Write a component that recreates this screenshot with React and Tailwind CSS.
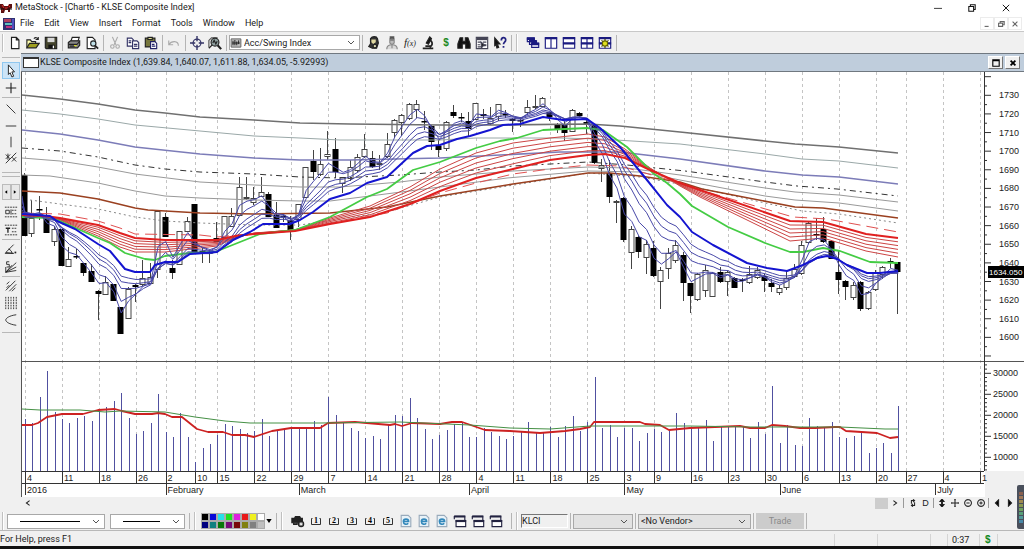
import React from "react";

/* ---------- chart data ---------- */

const X0 = 25;
const STEP = 7.4;
const barX = (i) => X0 + STEP * i;

// [high, low, body top, body bottom, kind] in chart units; f = down bar, h = up bar, g = shaded
const CANDLES = [
  [173, 236, 175, 236, "f"], [200, 237, 218, 234, "h"], [196, 220, 209, 210, "f"], [207, 233, 217, 233, "f"],
  [226, 246, 229, 242, "h"], [229, 266, 229, 266, "f"], [247, 267, 259, 267, "h"], [249, 259, 256, 257, "f"],
  [263, 276, 263, 273, "f"], [264, 282, 271, 282, "f"], [290, 320, 291, 294, "f"], [276, 295, 282, 295, "h"],
  [284, 301, 284, 301, "f"], [307, 334, 307, 334, "f"], [287, 319, 289, 319, "h"], [284, 302, 285, 287, "f"],
  [260, 286, 278, 285, "h"], [263, 284, 277, 284, "h"], [211, 278, 211, 270, "h"], [213, 237, 217, 237, "f"],
  [260, 279, 268, 273, "f"], [231, 265, 231, 265, "h"], [217, 232, 221, 232, "h"], [204, 253, 204, 253, "f"],
  [248, 263, 251, 253, "f"], [250, 263, 252, 254, "f"], [222, 242, 238, 242, "f"], [216, 238, 216, 238, "h"],
  [208, 227, 216, 227, "h"], [177, 216, 187, 216, "h"], [177, 200, 197, 199, "h"], [187, 205, 198, 203, "h"],
  [177, 197, 192, 197, "h"], [192, 217, 194, 217, "f"], [202, 228, 215, 228, "f"], [214, 222, 216, 217, "f"],
  [216, 240, 220, 230, "f"], [204, 227, 204, 220, "h"], [167, 198, 167, 198, "h"], [150, 180, 161, 172, "f"],
  [148, 176, 164, 175, "h"], [131, 160, 154, 157, "h"], [138, 178, 149, 172, "f"], [177, 193, 177, 184, "h"],
  [160, 181, 167, 179, "h"], [154, 172, 157, 171, "h"], [134, 158, 149, 157, "h"], [151, 168, 158, 167, "f"],
  [155, 170, 163, 165, "h"], [133, 158, 144, 157, "h"], [119, 138, 120, 133, "h"], [114, 136, 115, 123, "h"],
  [103, 120, 104, 119, "h"], [100, 118, 104, 110, "h"], [111, 130, 121, 122, "f"], [125, 150, 126, 142, "f"],
  [140, 157, 146, 150, "f"], [121, 151, 122, 149, "h"], [105, 118, 112, 116, "f"], [113, 122, 117, 118, "f"],
  [112, 137, 121, 129, "f"], [103, 120, 103, 120, "h"], [109, 119, 114, 116, "f"], [107, 125, 118, 124, "h"],
  [104, 121, 104, 117, "h"], [110, 118, 114, 115, "f"], [118, 132, 119, 121, "f"], [117, 127, 120, 121, "f"],
  [100, 115, 107, 113, "h"], [95, 109, 106, 108, "h"], [97, 107, 98, 107, "h"], [112, 121, 112, 117, "f"],
  [123, 133, 125, 129, "f"], [121, 141, 125, 133, "f"], [109, 132, 110, 132, "h"], [112, 117, 113, 116, "f"],
  [118, 134, 122, 124, "f"], [125, 164, 125, 163, "f"], [159, 182, 165, 169, "g"], [160, 203, 173, 197, "f"],
  [200, 223, 201, 203, "g"], [197, 242, 198, 240, "f"], [226, 269, 229, 253, "h"], [236, 258, 237, 252, "f"],
  [240, 274, 244, 258, "h"], [241, 277, 248, 276, "f"], [267, 309, 270, 282, "h"], [248, 279, 253, 269, "h"],
  [240, 263, 245, 261, "h"], [252, 301, 255, 283, "f"], [283, 313, 283, 296, "f"], [273, 301, 274, 300, "h"],
  [265, 297, 270, 291, "h"], [272, 297, 273, 297, "h"], [267, 283, 272, 282, "f"], [271, 296, 272, 282, "h"],
  [277, 288, 278, 288, "f"], [278, 292, 279, 281, "f"], [266, 284, 274, 283, "h"], [267, 279, 270, 278, "h"],
  [274, 292, 276, 281, "f"], [279, 292, 283, 287, "f"], [285, 295, 288, 293, "h"], [270, 290, 278, 288, "h"],
  [264, 278, 269, 277, "h"], [241, 275, 245, 274, "h"], [222, 244, 223, 243, "h"], [218, 240, 234, 235, "f"],
  [217, 243, 229, 242, "f"], [240, 259, 241, 259, "f"], [250, 294, 272, 280, "f"], [280, 300, 281, 287, "f"],
  [282, 300, 285, 298, "h"], [281, 311, 282, 309, "f"], [291, 310, 292, 309, "h"], [270, 291, 273, 290, "h"],
  [266, 279, 267, 275, "h"], [258, 268, 261, 262, "f"], [262, 314, 262, 272, "f"],
];

const VOLUME_TOPS = [
  419, 423, 397, 371, 412, 419, 423, 418, 416, 421, 410, 407, 401, 393, 418, 434, 431, 423, 394, 432, 437, 413, 437,
  462, 448, 444, 435, 424, 426, 429, 433, 431, 419, 436, 431, 428, 428, 428, 428, 421, 425, 397, 415, 422, 428, 431,
  438, 436, 439, 424, 415, 416, 398, 418, 429, 439, 435, 430, 424, 423, 437, 437, 428, 432, 436, 439, 436, 431, 422,
  432, 432, 427, 437, 426, 416, 431, 422, 377, 428, 425, 437, 428, 428, 441, 433, 429, 432, 431, 413, 423, 428, 428,
  420, 441, 427, 427, 427, 426, 438, 422, 434, 386, 443, 425, 445, 446, 418, 426, 427, 422, 437, 438, 436, 432, 453,
  448, 443, 453, 406,
];

const GRAY = [[22, 95], [60, 99], [98, 104], [135, 110], [165, 113], [200, 117], [254, 120], [300, 123], [350, 124], [440, 125], [500, 125], [588, 124], [620, 126], [680, 132], [765, 141], [795, 144], [839, 147], [898, 153]];
const SLATE = [[22, 110], [60, 114], [98, 119], [135, 125], [200, 131], [254, 136], [300, 138], [340, 140], [440, 140], [476, 138], [560, 138], [600, 139], [680, 144], [765, 154], [802, 159], [839, 161], [898, 168]];
const STEEL = [[22, 130], [60, 134], [98, 140], [135, 147], [200, 154], [254, 158], [300, 160], [350, 160], [440, 158], [500, 155], [560, 152], [620, 152], [680, 159], [765, 171], [802, 175], [839, 177], [898, 184]];
const DASHDOT = [[22, 148], [60, 151], [98, 157], [135, 165], [165, 169], [200, 172], [254, 174], [300, 177], [340, 178], [400, 175], [440, 172], [476, 170], [513, 166], [588, 162], [627, 165], [685, 171], [765, 182], [797, 186], [837, 189], [898, 196]];
const THIN_A = [[22, 158], [60, 161], [98, 167], [135, 174], [200, 182], [254, 185], [300, 187], [340, 187], [400, 182], [440, 177], [513, 171], [588, 167], [627, 168], [680, 175], [765, 188], [795, 192], [839, 195], [898, 202]];
const THIN_B = [[22, 175], [50, 176], [98, 183], [135, 191], [165, 196], [200, 198], [254, 200], [300, 201], [330, 201], [370, 196], [440, 187], [507, 178], [588, 171], [640, 172], [680, 180], [765, 196], [795, 200], [839, 203], [898, 211]];
const BROWN = [[22, 191], [60, 193], [98, 199], [135, 208], [148, 210], [200, 213], [254, 214], [330, 213], [387, 207], [440, 196], [513, 184], [588, 173], [610, 173], [640, 176], [680, 182], [702, 189], [795, 207], [823, 208], [898, 218]];
const DOTTED = [[30, 200], [60, 204], [98, 209], [135, 217], [165, 221], [200, 223], [254, 225], [300, 225], [387, 212], [440, 197], [588, 173], [640, 177], [690, 186], [765, 203], [802, 211], [839, 214], [898, 223]];
const RED_DASH = [[22, 213], [60, 214], [98, 221], [120, 228], [135, 234], [200, 235], [217, 237], [260, 233], [300, 229], [387, 213], [440, 193], [476, 183], [513, 174], [550, 169], [588, 165], [620, 166], [680, 183], [700, 190], [793, 217], [827, 219], [898, 232]];
const RED = [[22, 215], [45, 216], [60, 218], [98, 225], [120, 233], [135, 238], [165, 240], [217, 240], [235, 236], [254, 234], [295, 231], [330, 224], [370, 217], [410, 204], [440, 191], [476, 178], [513, 169], [550, 160], [588, 155], [605, 154], [625, 158], [650, 170], [680, 183], [700, 190], [790, 221], [823, 222], [866, 234], [898, 238]];
const RED_OUTER = [[22, 216], [45, 217], [60, 220], [98, 236], [120, 247], [135, 252], [165, 252], [217, 246], [235, 238], [254, 233], [295, 230], [330, 218], [370, 206], [410, 187], [440, 169], [476, 153], [513, 143], [550, 138], [588, 134], [605, 137], [625, 149], [650, 168], [680, 186], [700, 197], [790, 241], [823, 238], [866, 251], [898, 257]];
const GREEN = [[22, 217], [50, 218], [60, 221], [98, 238], [110, 243], [125, 253], [145, 259], [155, 260], [165, 256], [190, 253], [215, 252], [240, 242], [260, 234], [295, 230], [330, 217], [367, 197], [387, 189], [413, 170], [440, 162], [476, 148], [500, 141], [517, 138], [543, 130], [587, 128], [603, 130], [627, 147], [653, 173], [667, 183], [680, 194], [692, 206], [728, 227], [765, 243], [790, 252], [803, 252], [823, 248], [840, 251], [870, 262], [898, 263]];
const BLUE = [[22, 214], [50, 216], [57, 221], [75, 229], [98, 244], [110, 251], [125, 269], [135, 272], [150, 272], [155, 265], [165, 262], [178, 262], [190, 254], [217, 252], [233, 240], [250, 232], [263, 224], [290, 224], [300, 220], [313, 212], [330, 199], [350, 193], [367, 183], [387, 177], [413, 153], [427, 146], [440, 145], [457, 139], [470, 136], [490, 130], [503, 125], [520, 124], [543, 117], [563, 120], [587, 119], [600, 128], [620, 147], [647, 180], [667, 205], [680, 217], [692, 232], [713, 245], [747, 263], [767, 268], [787, 271], [803, 265], [817, 258], [827, 256], [837, 259], [847, 265], [867, 273], [880, 273], [898, 271]];
const VOL_RED = [[22, 425], [32, 425], [38, 423], [47, 417], [62, 414], [83, 414], [98, 410], [115, 409], [122, 411], [135, 414], [152, 414], [158, 413], [165, 414], [172, 417], [182, 417], [197, 429], [208, 432], [223, 432], [232, 435], [245, 435], [254, 437], [272, 431], [291, 428], [320, 428], [328, 423], [355, 422], [390, 425], [395, 424], [402, 426], [412, 423], [440, 424], [452, 422], [462, 422], [485, 430], [510, 431], [540, 433], [565, 431], [580, 429], [590, 427], [594, 422], [640, 422], [645, 424], [660, 425], [669, 430], [690, 428], [740, 426], [750, 428], [765, 428], [772, 425], [785, 426], [800, 428], [815, 428], [835, 427], [840, 427], [846, 431], [877, 433], [890, 438], [898, 437]];
const VOL_GREEN = [[22, 409], [40, 410], [80, 410], [105, 412], [120, 411], [165, 412], [195, 417], [225, 421], [250, 423], [320, 423], [400, 422], [470, 425], [510, 428], [550, 429], [590, 426], [690, 426], [750, 427], [840, 427], [885, 429], [898, 429]];

const DAYS = [[0, "4"], [5, "11"], [10, "18"], [15, "26"], [19, "2"], [23, "10"], [26, "15"], [31, "22"], [36, "29"], [41, "7"], [46, "14"], [51, "21"], [56, "28"], [61, "4"], [66, "11"], [71, "18"], [76, "25"], [81, "3"], [85, "9"], [90, "16"], [95, "23"], [100, "30"], [105, "6"], [110, "13"], [115, "20"], [119, "27"], [124, "4"], [129, ""]];
const MONTHS = [[0, "2016"], [19, "February"], [37, "March"], [60, "April"], [81, "May"], [102, "June"], [123, "July"]];

const pts = (list) => list.map((p) => p.join(",")).join(" ");
const blend = (a, b, t) => a.map(([x, y], i) => [x, y + (b[i][1] - y) * t]);

function ema(period, seed) {
  const k = 2 / (period + 1);
  let v = seed;
  return [[22, seed]].concat(
    CANDLES.map((c, i) => {
      const close = c[4] === "f" ? c[3] : c[2];
      v += k * (close - v);
      return [barX(i), v];
    })
  );
}

const priceY = (p) => 95.3 + (1730 - p) * 1.862;
const volumeY = (v) => 373.3 + (30000 - v) * 0.0042;
const range = (from, to, step) => Array.from({ length: Math.floor((to - from) / step) + 1 }, (_, i) => from + i * step);

function Candle({ i, c }) {
  const [hi, lo, top, bottom, kind] = c;
  const x = Math.round(barX(i)) - 0.5;
  const fill = kind === "f" ? "#000" : kind === "g" ? "#ccc" : "#fff";
  return (
    <g>
      <line x1={x} x2={x} y1={hi} y2={lo} stroke="#444" />
      <rect x={x - 2.5} y={top + 0.5} width="5" height={Math.max(bottom - top - 1, 0.5)} fill={fill} stroke={kind === "f" ? "#000" : "#444"} />
    </g>
  );
}

function Line({ data, color, w = 1, dash, opacity }) {
  return <polyline points={pts(data)} fill="none" stroke={color} strokeWidth={w} strokeDasharray={dash} opacity={opacity} strokeLinejoin="round" />;
}

function Chart() {
  return (
    <svg viewBox="22 72 1002 425" className="block h-auto w-full bg-[#f0f0f0] font-['Liberation_Sans',sans-serif]" role="img" aria-label="KLSE Composite Index price and volume">
      <rect x="21" y="72" width="1003" height="399" fill="#fff" />
      <rect x="21" y="470" width="964" height="27" fill="#fff" />

      {DAYS.map(([i]) => (
        <line key={i} x1={Math.round(barX(i)) + 0.5} x2={Math.round(barX(i)) + 0.5} y1="72" y2="471" stroke="#c4c4c4" strokeDasharray="3 3" />
      ))}

      {CANDLES.map((c, i) => <Candle key={i} i={i} c={c} />)}

      <Line data={GRAY} color="#707070" w={1.6} />
      <Line data={SLATE} color="#9aa8a8" />
      <Line data={STEEL} color="#7c7cb8" w={1.6} />
      <Line data={DASHDOT} color="#333" dash="6 4 2 4" />
      <Line data={THIN_A} color="#999" />
      <Line data={THIN_B} color="#999" />
      <Line data={DOTTED} color="#888" dash="2 3" />
      <Line data={BROWN} color="#9a4020" w={1.6} />
      <Line data={RED_DASH} color="#e05050" dash="12 6" />
      {[0.2, 0.4, 0.6, 0.8, 1].map((t) => <Line key={t} data={blend(RED, RED_OUTER, t)} color="#cc4444" />)}
      <Line data={GREEN} color="#44cc44" w={1.8} />
      {[3, 5, 8, 10, 12].map((p) => <Line key={p} data={ema(p, 190 + p * 2)} color="#4848a8" />)}
      <Line data={RED} color="#e02020" w={2} />
      <Line data={BLUE} color="#1414d0" w={2} />

      <g stroke="#5050a0">
        {VOLUME_TOPS.map((y, i) => <line key={i} x1={Math.round(barX(i)) + 0.5} x2={Math.round(barX(i)) + 0.5} y1={y} y2="471" />)}
      </g>
      <Line data={VOL_RED} color="#cc2222" w={1.8} />
      <Line data={VOL_GREEN} color="#459045" />

      <g stroke="#333">
        <line x1="21" x2="1024" y1="361.5" y2="361.5" stroke="#555" />
        <line x1="984.5" x2="984.5" y1="72" y2="471" />
        <line x1="21" x2="984" y1="471.5" y2="471.5" />
        <line x1="21" x2="984" y1="483.5" y2="483.5" />
        {range(1590, 1740, 5).map((p) => <line key={p} x1="985" x2={p % 10 ? 987 : 991} y1={priceY(p)} y2={priceY(p)} />)}
        {range(7000, 32000, 1000).map((v) => <line key={v} x1="985" x2={v % 5000 ? 987 : 991} y1={volumeY(v)} y2={volumeY(v)} />)}
        {DAYS.map(([i]) => <line key={i} x1={Math.round(barX(i)) + 0.5} x2={Math.round(barX(i)) + 0.5} y1="471" y2="483" />)}
        {MONTHS.map(([i]) => <line key={i} x1={Math.round(barX(i)) + 0.5} x2={Math.round(barX(i)) + 0.5} y1="483" y2="495" />)}
      </g>

      <g fontSize="9" fill="#222">
        {range(1600, 1730, 10).map((p) => <text key={p} x="999" y={priceY(p) + 3}>{p}</text>)}
        {range(10000, 30000, 5000).map((v) => <text key={v} x="993" y={volumeY(v) + 3}>{v}</text>)}
        {DAYS.map(([i, t]) => <text key={i} x={barX(i) + 2} y="481">{t}</text>)}
        <text x="982" y="481">1</text>
        {MONTHS.map(([i, t]) => <text key={i} x={barX(i) + 2} y="493">{t}</text>)}
        <rect x="988" y="266" width="36" height="12" fill="#000" />
        <text x="989" y="275" fontSize="8" fill="#fff">1634.050</text>
      </g>
    </svg>
  );
}

/* ---------- icons, drawn on a 16-unit grid ---------- */

function Ico({ children }) {
  return (
    <svg viewBox="0 0 16 16" className="h-3.5 w-3.5" fill="none" stroke="#222" strokeWidth="1.3" aria-hidden="true">
      {children}
    </svg>
  );
}

const I = {
  file: <path d="M4 1.5h5.500l3 3v10H4zM9.500 1.500v3h3" fill="#fff" />,
  open: <><path d="M1 13.500V4.500h4l1.500 2H11v2" fill="#ffffb0" /><path d="M1 13.500l3-5h11l-3.500 5z" fill="#a0a020" /><path d="M9 3c2-2 4-1 5 1m0-3v3h-3" /></>,
  save: <><path d="M1.500 1.500h13v13h-12l-1-1z" fill="#44442c" /><path d="M4 2h8v5H4z" fill="#d8d8d8" stroke="none" /><path d="M5 10h7v4H5z" fill="#111" stroke="none" /><path d="M10 11h1.500v3H10z" fill="#fff" stroke="none" /></>,
  print: <><path d="M4.500 6l1.500-4.500h8L12.500 6z" fill="#fff" /><path d="M1.500 7.500L4 5.500h10.500v5l-2.500 3H1.500z" fill="#888" /><path d="M2 9.500h10M12 9l2.500-3M3 11.500h6" /><path d="M8 11h3" stroke="#dddd20" /></>,
  preview: <><path d="M2.500 1.500h6l3 3v10h-9z" fill="#fff" /><circle cx="9.500" cy="8.500" r="3" fill="#bfe0e8" /><path d="M11.500 11l3.500 3.500" strokeWidth="2" /></>,
  cut: <g stroke="#aaa"><path d="M5 1l4 9M11 1L7 10" /><circle cx="5" cy="12" r="2" /><circle cx="11" cy="12" r="2" /></g>,
  copy: <g stroke="#333366"><path d="M1.500 2.500h5l2 2v7h-7z" fill="#fff" /><path d="M7.500 5.500h5l2 2v7h-7z" fill="#fff" /><path d="M3 5.500h3M3 7.500h3M9 9.500h4M9 11.500h4" /></g>,
  paste: <><path d="M1.500 2.500h11v10h-11z" fill="#77773c" /><path d="M4.500 1.500h5v2.500h-5z" fill="#dddd90" /><path d="M7.500 6.500h5l2 2v6h-7z" fill="#fff" stroke="#222266" /><path d="M9 9.500h3M9 11.500h4" stroke="#222266" /></>,
  undo: <path d="M2 5v5h5M2 10c3-5 11-5 11 1" stroke="#aaa" />,
  target: <g stroke="#333366"><circle cx="8" cy="8" r="4.500" /><path d="M8 0v6M8 10v6M0 8h6M10 8h6" strokeWidth="1.600" /></g>,
  zoom: <><path d="M1 13V5l3-3h7" stroke="#555" /><circle cx="8" cy="7" r="4.500" fill="#8fa0a0" /><path d="M5.500 8l1.500-3 2 4 1.500-3" /><path d="M1 14l4-4" /><path d="M11 10.500l4 4.500" strokeWidth="2.500" /></>,
  indicator: <><path d="M1.500 2.500h13v11h-13z" fill="#bbb" stroke="#666" /><path d="M4 5v6M6.500 4v7M9 6v5M11.500 4.500v5M3 8h10" /></>,
  expert: <><path d="M4 3c2-3 7-3 8 0l1 5-2 6H6L2 12l2-3z" fill="#333" /><path d="M5 4h5v3l-3 2-2-2z" fill="#e0d8a0" stroke="none" /><circle cx="9" cy="11.500" r="2" fill="#d8d8b0" /></>,
  agent: <g stroke="#888"><path d="M5 3.500h6M6 3V1h4v2" fill="#555" stroke="#555" /><path d="M5.500 5h5v3L8 10 5.500 8z" fill="#bbb" /><path d="M2 15c0-4 3-5 6-5s6 1 6 5" fill="#d8d8d8" /><path d="M8 10v4" /></g>,
  scope: <><path d="M10 1L6 8l2.500 1.500L12 3z" fill="#111" /><path d="M11 5c3 3 2 6-1 8M2 14h12M5 11.500h6" strokeWidth="2" /></>,
  binoc: <g fill="#111"><path d="M3.500 2h3v4h3V2h3l2.500 7v5h-5V9h-4v5H1V9z" /></g>,
  sheet: <g stroke="#445"><path d="M1.500 1.500h13v13h-13z" fill="#fff" /><path d="M2 3.500h12" strokeWidth="2.500" /><path d="M3 7h4M9 7h4M3 10h3M11 10h2M3 12.500h4" /><path d="M7 7l5 4-3 .5-1.500 2z" fill="#222" /></g>,
  help: <><path d="M2 2l6 7H5l1.500 4-2 .7L3.500 10 2 11z" fill="#111" /><path d="M9.500 5c0-4 5-4 5-.5 0 2.500-2.500 2.500-2.500 5M12 11.500v2" stroke="#222280" strokeWidth="2" /></>,
  cascade: <g stroke="#1a1a80" fill="#fff"><path d="M1.500 2.500h8v4h-8z" /><path d="M4 5.500h8v4H4z" /><path d="M6.500 8.500h8v4.500h-8z" /><path d="M1 3h9M3.500 6H12M6 9h9" strokeWidth="3" /></g>,
  tileV: <g stroke="#1a1a80"><path d="M1.500 2h13v12h-13zM8 2v12" fill="#fff" /><path d="M1 2.500h14" strokeWidth="2.500" /></g>,
  tileH: <g stroke="#1a1a80"><path d="M1.500 2h13v12h-13z" fill="#fff" /><path d="M1 2.500h14M1 8.500h14" strokeWidth="2.500" /></g>,
  tileQ: <g stroke="#1a1a80"><path d="M1.500 2h13v12h-13zM8 2v12" fill="#fff" /><path d="M1 2.500h14M1 8.500h14" strokeWidth="2.500" /></g>,
  tileSun: <><path d="M1.500 2h13v12h-13z" fill="#fff" stroke="#1a1a80" /><path d="M1 2.500h14M1 8.500h14" strokeWidth="2.500" stroke="#1a1a80" /><path d="M8 3v11M4 5l8 7M12 5l-8 7" stroke="#444400" /><circle cx="8" cy="8.500" r="3" fill="#e0e020" stroke="#666600" /></>,
  ie: <><path d="M2.500 1.500h8l3 3v10h-11z" fill="#e8f2f8" stroke="#9ab" /><path d="M5 8.500h6c0-3.500-6-3.500-6 0s4 4 5.500 2" stroke="#3388bb" strokeWidth="1.800" /></>,
  win: <g stroke="#222240"><path d="M1.500 2.500h12v5M1.500 2.500V6" /><path d="M1 3h13" strokeWidth="2" /><path d="M3.500 7.500h11v7h-11z" fill="#fff" /><path d="M3 8h12" strokeWidth="2.500" /></g>,
  dl: <><path d="M1 8V5h3l1-2h5l1 2h2v5H1z" fill="#222" /><path d="M3 10v2h4v-2" fill="#444" /><circle cx="11.500" cy="11.500" r="3" fill="#888" /><path d="M10.500 10.500l2 2M12.500 10.500l-2 2" stroke="#fff" strokeWidth="1" /></>,
  cursor: <path d="M5 1l7 8H9l2 5-2 .8L7 10l-2 2z" fill="#fff" strokeWidth="1.100" />,
  plus: <path d="M8 2v12M2 8h12" />,
  diag: <path d="M3 3l10 10" strokeWidth="1" />,
  horiz: <path d="M2 8h12" strokeWidth="1" />,
  vert: <path d="M8 2v12" strokeWidth="1" />,
  fx: <g strokeWidth="1"><path d="M2 14L14 2M2 4l5 5M2 9l5-5M4.500 3v7M9 7l5 5M9 12l5-5" /></g>,
  hLines: <g strokeWidth="1"><path d="M1 2.500h14M1 13.500h14M9 6h6M9 10h6" strokeDasharray="2 1" /><path d="M2 6h4v4H2zM8 5v6" /></g>,
  hLines2: <g strokeWidth="1"><path d="M1 2.500h14M1 13.500h14M9 6h6M9 10h6" strokeDasharray="2 1" /><path d="M2 6h5M4.500 6v5" strokeWidth="1.500" /></g>,
  angle: <g strokeWidth="1"><path d="M1 13h10L2 12 11 3M5 8c3 1 4 3 4 5" /><path d="M12 12h2" strokeWidth="2" /></g>,
  fan: <g strokeWidth="1"><path d="M2 14L9 6M2 14L14 3M2 14l12-6M2 14l12-2M2 14V8M6 2H3v3h3v3H3" /></g>,
  pitch: <g strokeWidth="1"><path d="M2 13L13 2M6 14l8-8M3 6l3-3M9 14l4-4M3 10l3-3" /></g>,
  vLines: <path d="M2 1v14M5 1v14M8 1v14M11 1v14M14 1v14" strokeDasharray="2 1" strokeWidth="1" />,
  arc: <path d="M14 2C6 3 2 6 2 8s4 5 12 6" strokeWidth="1" />,
};

const Tool = ({ icon, label }) => (
  <button type="button" aria-label={label} className="flex h-4 w-[18px] shrink-0 items-center justify-center">{icon}</button>
);
const T = ({ name, label }) => <Tool label={label} icon={<Ico>{I[name]}</Ico>} />;
const Sep = () => <span className="mx-0.5 h-4 w-px shrink-0 bg-[#b4b4b4]" />;
const Grip = () => <span className="mx-0.5 h-[18px] w-0.5 shrink-0 border-l border-l-[#c0c0c0] bg-white" />;
const HSep = () => <span className="h-px w-[18px] shrink-0 bg-[#b8b8b8]" />;

function Combo({ label, width, text, line, muted, inset }) {
  return (
    <div className={`relative flex h-[15px] shrink-0 items-center border border-[#a8a8a8] ${width} ${muted ? "bg-[#e2e2e2]" : "bg-white"}`}>
      {inset}
      <select aria-label={label} className="h-full min-w-0 flex-1 appearance-none bg-transparent pr-3 pl-0.5 text-[9px] leading-3 outline-none">
        <option>{text}</option>
      </select>
      {line && <span className="pointer-events-none absolute top-1.5 right-6 left-3 h-px bg-black" />}
      <svg viewBox="0 0 8 6" className="pointer-events-none absolute top-1 right-1 h-1.5 w-2" fill="none" stroke="#555" aria-hidden="true">
        <path d="M1 1l3 3 3-3" />
      </svg>
    </div>
  );
}

const PALETTE = [
  "bg-[#000000]", "bg-[#0808d8]", "bg-[#28e0e8]", "bg-[#20e020]", "bg-[#e020e0]", "bg-[#e81818]", "bg-[#f0f020]", "bg-[#ffffff]",
  "bg-[#000080]", "bg-[#108080]", "bg-[#087808]", "bg-[#780878]", "bg-[#780808]", "bg-[#808010]", "bg-[#808080]", "bg-[#c0c0c0]",
];

function TitleBar() {
  return (
    <header className="flex h-4 items-center bg-white text-[9px]">
      <svg viewBox="0 0 12 10" className="h-2.5 w-3" aria-hidden="true">
        <path d="M0 1h3l1 2h4l1-2h3v4l-2 1v3H8V7H5l-1 3H1V6L0 5z" fill="#5c1010" />
        <path d="M2 2l2 3M8 2l2 2M5 5h3M2 7h1" stroke="#e03030" />
        <path d="M0 6h4M7 6h5" stroke="#111" />
      </svg>
      <h1 className="ml-[3px] whitespace-nowrap">MetaStock - [Chart6 - KLSE Composite Index]</h1>
      <div className="ml-auto flex items-center gap-[26px] pr-3.5">
        <button type="button" aria-label="Minimize"><svg viewBox="0 0 10 10" className="h-2 w-2" stroke="#111"><path d="M0 5.500h10" /></svg></button>
        <button type="button" aria-label="Restore"><svg viewBox="0 0 10 10" className="h-2 w-2" stroke="#111" strokeWidth="1.300" fill="none"><path d="M1 3h6v6H1zM3 3V1h6v6H7" /></svg></button>
        <button type="button" aria-label="Close"><svg viewBox="0 0 10 10" className="h-2 w-2" stroke="#111" strokeWidth="1.200"><path d="M1 1l8 8M9 1L1 9" /></svg></button>
      </div>
    </header>
  );
}

function MenuBar() {
  return (
    <nav className="flex h-[15px] items-center bg-white pl-[3px] text-[9px]">
      <svg viewBox="0 0 12 12" className="h-3 w-3" aria-hidden="true">
        <path d="M0 0h12v12H0z" fill="#303070" />
        <path d="M1 1h7v3H1z" fill="#b04060" /><path d="M2 5h7v2H2z" fill="#60c0c0" /><path d="M3 8h6v2H3z" fill="#c03080" /><path d="M9 1h2v10H9z" fill="#5050c0" />
      </svg>
      <ul className="ml-[5px] flex gap-2.5">
        {["File", "Edit", "View", "Insert", "Format", "Tools", "Window", "Help"].map((m) => (
          <li key={m}><button type="button">{m}</button></li>
        ))}
      </ul>
      <div className="ml-auto flex h-[13px] items-center pr-0.5">
        {[["Minimize chart", "M2 8h5"], ["Restore chart", "M2 4h5v4H2zM4 4V2h5v4H7"], ["Close chart", "M2 2l6 6M8 2L2 8"]].map(([l, d]) => (
          <button key={l} type="button" aria-label={l} className="flex h-[13px] w-[14px] items-center justify-center border border-[#ececec]">
            <svg viewBox="0 0 10 10" className="h-2 w-2" stroke="#666" strokeWidth="1.400" fill="none"><path d={d} /></svg>
          </button>
        ))}
      </div>
    </nav>
  );
}

function Toolbar() {
  return (
    <div role="toolbar" aria-label="Standard" className="flex h-[22px] items-center border-t border-[#c8c8c8] bg-[#f0f0f0]">
      <Grip />
      <T name="file" label="New" /><T name="open" label="Open" /><T name="save" label="Save" />
      <Sep />
      <T name="print" label="Print" /><T name="preview" label="Print preview" />
      <Sep />
      <T name="cut" label="Cut" /><T name="copy" label="Copy" /><T name="paste" label="Paste" />
      <Sep />
      <T name="undo" label="Undo" />
      <Sep />
      <T name="target" label="Crosshairs" /><T name="zoom" label="Zoom" />
      <Sep />
      <Combo label="Indicator" width="w-[131px]" text="Acc/Swing Index" inset={<span className="flex w-3"><Ico>{I.indicator}</Ico></span>} />
      <Sep />
      <T name="expert" label="Expert advisor" /><T name="agent" label="Explorer agent" />
      <Tool label="Indicator builder" icon={<span className="font-['Liberation_Serif',serif] text-[11px] leading-3 italic">f<span className="text-[8px]">(x)</span></span>} />
      <T name="scope" label="System tester" />
      <Tool label="Prices" icon={<span className="font-['Liberation_Sans',sans-serif] text-[10px] font-bold text-[#208820]">$</span>} />
      <T name="binoc" label="Explorer" /><T name="sheet" label="Option scope" /><T name="help" label="Context help" />
      <Sep /><Grip /><span className="w-1" />
      <T name="cascade" label="Cascade" /><T name="tileV" label="Tile vertically" /><T name="tileH" label="Tile horizontally" /><T name="tileQ" label="Tile grid" /><T name="tileSun" label="Arrange" />
      <Sep />
    </div>
  );
}

function Rail() {
  return (
    <aside className="flex w-[21px] shrink-0 flex-col items-center bg-[#f0f0f0] pt-1">
      <HSep />
      <div className="flex flex-col items-center pt-1">
        <button type="button" aria-label="Select" className="flex h-[17px] w-[18px] items-center justify-center border border-[#90c8f0] bg-[#cce4f7]"><Ico>{I.cursor}</Ico></button>
        <button type="button" aria-label="Crosshair" className="flex h-[18px] items-center"><Ico>{I.plus}</Ico></button>
        <HSep />
        <button type="button" aria-label="Trend line" className="mt-0.5 flex h-[17px] items-center"><Ico>{I.diag}</Ico></button>
        <button type="button" aria-label="Horizontal line" className="flex h-[17px] items-center"><Ico>{I.horiz}</Ico></button>
        <button type="button" aria-label="Vertical line" className="flex h-4 items-center"><Ico>{I.vert}</Ico></button>
        <button type="button" aria-label="Trend line by angle" className="flex h-4 items-center"><Ico>{I.fx}</Ico></button>
      </div>
      <div className="flex flex-col items-center gap-[3px] pt-1.5"><HSep /><HSep /></div>
      <div className="flex pt-[7px] pb-[3px]">
        {["M7 2v6L3 5z", "M3 2v6l4-3z"].map((d, i) => (
          <button key={d} type="button" aria-label={i ? "Next" : "Previous"} className="flex h-4 w-[9px] items-center justify-center border border-[#bbb] bg-[#e8e8e8]">
            <svg viewBox="0 0 10 10" className="h-1.5 w-1.5"><path d={d} fill="#000" /></svg>
          </button>
        ))}
      </div>
      {[["hLines", "Quadrant lines"], ["hLines2", "Fibonacci retracement"]].map(([n, l]) => (
        <button key={n} type="button" aria-label={l} className="flex h-[18px] items-center"><Ico>{I[n]}</Ico></button>
      ))}
      <HSep />
      {[["angle", "Gann line"], ["fan", "Gann fan"]].map(([n, l]) => (
        <button key={n} type="button" aria-label={l} className="flex h-[18px] items-center"><Ico>{I[n]}</Ico></button>
      ))}
      <HSep />
      {[["pitch", "Andrews pitchfork"], ["vLines", "Time zones"], ["arc", "Fibonacci arcs"]].map(([n, l]) => (
        <button key={n} type="button" aria-label={l} className="flex h-[17px] items-center"><Ico>{I[n]}</Ico></button>
      ))}
      <span className="h-1" />
      <HSep />
    </aside>
  );
}

function ChartHeader() {
  return (
    <div className="flex h-[19px] items-center border-y border-[#707880] bg-[#bfcddc] pr-1 pl-0.5 text-[9px]">
      <span className="h-[11px] w-4 border border-t-2 border-[#333] bg-white" />
      <h2 className="ml-px whitespace-nowrap">KLSE Composite Index (1,639.84, 1,640.07, 1,611.88, 1,634.05, -5.92993)</h2>
      <div className="ml-auto flex gap-0.5">
        {[["Maximize panel", "M1 1h8v8H1zM1 2h8"], ["Close panel", "M2 2l6 6M8 2L2 8"]].map(([l, d], i) => (
          <button key={l} type="button" aria-label={l} className="flex h-[13px] w-[15px] items-center justify-center border border-t-white border-r-[#777] border-b-[#777] border-l-white bg-[#f0f0f0]">
            <svg viewBox="0 0 10 10" className="h-2 w-2" stroke="#000" fill="none" strokeWidth={i ? 2.2 : 1.4}><path d={d} /></svg>
          </button>
        ))}
      </div>
    </div>
  );
}

function NavBtn({ label, d, fill }) {
  return (
    <button type="button" aria-label={label} className="flex h-3 w-[13px] items-center justify-center">
      <svg viewBox="0 0 10 10" className="h-2 w-2" stroke="#222" strokeWidth="1.300" fill={fill ? "#000" : "none"}><path d={d} /></svg>
    </button>
  );
}

function ScrollRow() {
  return (
    <div className="flex h-3 items-center bg-[#f0f0f0] pr-2">
      <NavBtn label="Scroll left" d="M7 2L3 5l4 3" />
      <span className="ml-auto h-[11px] w-[13px] bg-[#cdcdcd]" />
      <NavBtn label="Scroll right" d="M3 2l4 3-4 3" />
      <span className="mx-0.5 h-2.5 w-px bg-[#999]" />
      <NavBtn label="Refresh" d="M3 6V2h4M5 .5L7 2 5 4M7 4v4H3M5 6L3 8l2 1.500" />
      <button type="button" aria-label="Daily" className="h-3 w-[13px] font-['Liberation_Sans',sans-serif] text-[9px] leading-3">D</button>
      <span className="mx-px h-2.5 w-px bg-[#999]" />
      <NavBtn label="Rescale vertically" fill d="M5 0l2.500 3H5.500v4h2L5 10 2.500 7h2V3h-2z" />
      <NavBtn label="Move" d="M5 0v10M0 5h10M4 1h2M4 9h2M1 4v2M9 4v2" />
      <NavBtn label="Zoom out" d="M5 .8a4.200 4.200 0 1 0 .1 0M3 5h4" />
      <NavBtn label="Zoom in" d="M5 .8a4.200 4.200 0 1 0 .1 0M3 5h4M5 3v4" />
      <span className="mx-px h-2.5 w-px bg-[#999]" />
      <NavBtn label="Previous security" fill d="M7 1v8L3 5z" />
      <NavBtn label="Next security" fill d="M3 1v8l4-4z" />
    </div>
  );
}

function BottomBar() {
  return (
    <div role="toolbar" aria-label="Drawing" className="flex h-[22px] items-center border-b border-[#b8b8b8] bg-[#f0f0f0] pt-[3px]">
      <Grip />
      <span className="w-px" />
      <Combo label="Line style" width="w-[98px]" line />
      <span className="w-[5px]" />
      <Combo label="Line weight" width="w-[75px]" line />
      <span className="w-0.5" /><Sep /><Grip /><span className="w-1" />
      <div className="grid grid-cols-8 gap-0.5">
        {PALETTE.map((c) => <button key={c} type="button" aria-label="Colour" className={`h-1.5 w-1.5 outline outline-[#aaa] ${c}`} />)}
      </div>
      <button type="button" aria-label="More colours" className="w-2.5 pl-0.5"><svg viewBox="0 0 8 6" className="h-1 w-1.5"><path d="M0 0h8L4 6z" /></svg></button>
      <Sep /><Grip /><span className="w-1" />
      <T name="dl" label="Downloader" />
      {[1, 2, 3, 4, 5].map((n) => (
        <Tool key={n} label={`Custom tool ${n}`} icon={
          <svg viewBox="0 0 12 10" className="h-2.5 w-3 font-['Liberation_Serif',serif]" aria-hidden="true">
            <path d="M2.500 2.500h-1v6h9v-6h-1" fill="none" stroke="#333" /><text x="4" y="7" fontSize="8" fontWeight="bold">{n}</text>
          </svg>} />
      ))}
      <T name="ie" label="Web page 1" /><T name="ie" label="Web page 2" /><T name="ie" label="Web page 3" />
      <T name="win" label="Window 1" /><T name="win" label="Window 2" /><T name="win" label="Window 3" />
      <span className="w-1" /><Sep /><Grip /><span className="w-px" />
      <input aria-label="Symbol" defaultValue="KLCI" className="h-3.5 w-[47px] border border-t-[#777] border-r-white border-b-white border-l-[#777] bg-[#f0f0f0] text-[9px] outline-none" />
      <Sep />
      <Combo label="Account" width="w-[60px]" muted />
      <Sep />
      <Combo label="Vendor" width="w-[113px]" text="<No Vendor>" muted />
      <Sep />
      <button type="button" className="h-4 w-12 bg-[#cccccc] text-[9px] leading-4 text-[#8a8a8a]">Trade</button>
      <Sep />
    </div>
  );
}

function StatusBar() {
  return (
    <footer className="flex h-[15px] items-center bg-[#f0f0f0] pt-0.5 text-[9px]">
      <p>For Help, press F1</p>
      <div className="ml-auto flex h-3 items-center">
        <span className="h-3 w-[43px] border-l border-[#d4d4d4]" />
        <span className="h-3 w-[53px] border-l border-[#d4d4d4]" />
        <span className="h-3 w-[17px] border-l border-[#d4d4d4]" />
        <span className="w-[32px] border-l border-[#d4d4d4] pl-1 leading-3">0:37</span>
        <span className="w-[18px] border-l border-[#d4d4d4] pl-[5px] font-['Liberation_Sans',sans-serif] text-[10px] leading-3 font-bold text-[#108820]">$</span>
        <span className="h-3 w-[27px] border-l border-[#d4d4d4]" />
      </div>
    </footer>
  );
}

export default function App() {
  return (
    <div className="relative flex min-h-screen w-full flex-col overflow-hidden bg-[#111] font-[Roboto,sans-serif] text-[#1a1a1a]">
      <TitleBar />
      <MenuBar />
      <Toolbar />
      <div className="flex bg-[#f0f0f0]">
        <Rail />
        <main className="min-w-0 flex-1">
          <ChartHeader />
          <div className="border-l border-[#555]"><Chart /></div>
          <ScrollRow />
        </main>
      </div>
      <BottomBar />
      <StatusBar />
      <div className="absolute right-0 bottom-5 flex h-11 w-[7px] flex-col justify-center gap-px rounded-l-xs bg-[#4a505c] pl-0.5" aria-hidden="true">
        {["bg-[#8a6050]", "bg-[#a07858]", "bg-[#a08a50]", "bg-[#8a9850]", "bg-[#70a060]", "bg-[#58a078]", "bg-[#509898]", "bg-[#4888a8]"].map((c) => (
          <span key={c} className={`h-[3px] w-1 ${c}`} />
        ))}
      </div>
    </div>
  );
}
